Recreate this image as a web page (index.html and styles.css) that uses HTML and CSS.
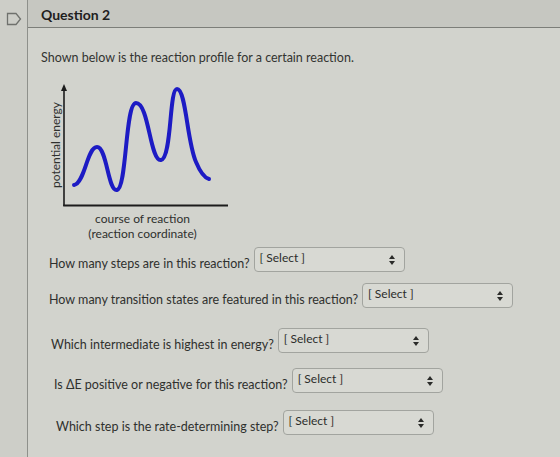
FILE: index.html
```html
<!DOCTYPE html>
<html lang="en">
  <head>
    <meta charset="UTF-8" />
    <meta name="viewport" content="width=device-width, initial-scale=1.0" />
    <title>Question 2</title>
    <link rel="stylesheet" href="styles.css">
  </head>
  <body>
    <div class="page">
      <!-- 왼쪽 플래그 영역 -->
      <div class="gutter">
        <svg class="flag" width="16" height="14" viewBox="0 0 16 14">
          <path d="M1.5 1.5 H10 L14.5 7 L10 12.5 H1.5 Z" fill="none" stroke="#6f716d" stroke-width="1.3" />
        </svg>
      </div>

      <div class="question">
        <div class="question-header">Question 2</div>

        <div class="question-body">
          <p class="intro">Shown below is the reaction profile for a certain reaction.</p>

          <!-- 반응 좌표 그래프 -->
          <div class="profile">
            <svg width="200" height="129" viewBox="0 0 200 129">
              <text class="axis-label" transform="translate(19 63) rotate(-90)" text-anchor="middle">potential energy</text>
              <line x1="23" y1="6" x2="23" y2="124" stroke="#1c1c1c" stroke-width="1.6" />
              <path d="M23 2 L20 9 L26 9 Z" fill="#1c1c1c" />
              <line x1="22.2" y1="123.5" x2="187" y2="123.5" stroke="#1c1c1c" stroke-width="1.8" />
              <path d="M33 103 C44 101 46 65 56 65 C66 65 67 110 76 108 C86 106 84 21 95 21 C108 21 109 80 120 78 C131 76 128 7 136 7 C145 7 146 60 155 80 C160 92 164 96 168 97" fill="none" stroke="#1d1bc4" stroke-width="4" stroke-linecap="round" />
            </svg>
            <div class="caption">
              course of reaction<br />
              (reaction coordinate)
            </div>
          </div>

          <div class="q-row row-1">
            <span>How many steps are in this reaction?</span>
            <div class="select">[ Select ]<span class="arrows"></span></div>
          </div>
          <div class="q-row row-2">
            <span>How many transition states are featured in this reaction?</span>
            <div class="select">[ Select ]<span class="arrows"></span></div>
          </div>
          <div class="q-row row-3">
            <span>Which intermediate is highest in energy?</span>
            <div class="select">[ Select ]<span class="arrows"></span></div>
          </div>
          <div class="q-row row-4">
            <span>Is &Delta;E positive or negative for this reaction?</span>
            <div class="select">[ Select ]<span class="arrows"></span></div>
          </div>
          <div class="q-row row-5">
            <span>Which step is the rate-determining step?</span>
            <div class="select">[ Select ]<span class="arrows"></span></div>
          </div>
        </div>
      </div>
    </div>
  </body>
</html>
```

FILE: styles.css
```css
* {
  padding: 0;
  margin: 0;
  box-sizing: border-box;
}
body {
  background: #d2d3cd;
  font-family: Lato, "Liberation Sans", sans-serif;
  color: #2f302e;
  height: 457px;
  overflow: hidden;
}
.page {
  display: flex;
  height: 100%;
}

.gutter {
  width: 28px;
  flex-shrink: 0;
  background: #cdcec8;
  border-right: 1.5px solid #8e908b;
  padding: 10px 0 0 6px;
}

.question {
  flex: 1;
}
.question-header {
  height: 28px;
  background: #c6c7c1;
  border-bottom: 1.5px solid #7c7e79;
  padding: 6px 0 0 13px;
  font-size: 14px;
  font-weight: bold;
  color: #1f201e;
}
.question-body {
  padding: 22px 0 0 13px;
}
.intro {
  font-size: 12.5px;
  color: #333431;
}

.profile {
  margin: 17px 0 0 0;
  width: 200px;
}
.profile svg {
  display: block;
}
.axis-label {
  font-family: Lato, "Liberation Sans", sans-serif;
  font-size: 12px;
  fill: #2f302e;
}
.caption {
  padding-left: 3px;
  width: 200px;
  text-align: center;
  font-size: 12px;
  line-height: 15px;
}

.q-row {
  display: flex;
  align-items: center;
  gap: 4px;
  font-size: 12.5px;
}
.q-row > span {
  padding-top: 8px;
}
.row-1 {
  margin: 6px 0 0 8px;
}
.row-2 {
  margin: 11px 0 0 8px;
}
.row-3 {
  margin: 20px 0 0 10px;
}
.row-4 {
  margin: 15px 0 0 13px;
}
.row-5 {
  margin: 17px 0 0 15px;
}

.select {
  position: relative;
  width: 151px;
  height: 25px;
  border: 1px solid #a2a49f;
  border-radius: 4px;
  background: #d8d9d3;
  padding: 2px 0 0 5px;
  font-size: 12px;
  color: #2c2d2b;
}
/* 위아래 화살표 */
.arrows {
  position: absolute;
  right: 9px;
  top: 7px;
  width: 6px;
  height: 10px;
}
.arrows::before,
.arrows::after {
  content: "";
  position: absolute;
  left: 0;
  border-left: 3px solid transparent;
  border-right: 3px solid transparent;
}
.arrows::before {
  top: 0;
  border-bottom: 4px solid #2a2b29;
}
.arrows::after {
  bottom: 0;
  border-top: 4px solid #2a2b29;
}
```
